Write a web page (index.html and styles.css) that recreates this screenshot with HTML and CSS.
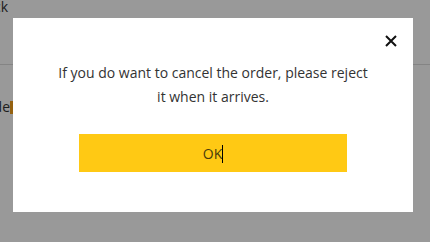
FILE: index.html
```html
<!DOCTYPE html>
<html lang="en">
<head>
  <meta charset="UTF-8">
  <meta name="viewport" content="width=device-width, initial-scale=1.0">
  <title>Cancel order</title>
  <link rel="stylesheet" href="styles.css">
</head>
<body>
  <div class="page">
    <header class="page-head">
      <div class="clip clip-head"><span>Back</span></div>
    </header>
    <div class="page-row">
      <div class="clip clip-row"><span>Code</span></div>
      <span class="row-mark"></span>
    </div>
  </div>

  <div class="overlay">
    <div class="modal">
      <button class="close-btn" aria-label="Close">
        <svg width="12" height="12" viewBox="0 0 12 12">
          <path d="M1 1 L11 11 M11 1 L1 11" stroke="#111" stroke-width="2" fill="none"/>
        </svg>
      </button>
      <p class="message">If you do want to cancel the order, please reject<br>it when it arrives.</p>
      <button class="ok-btn">OK<span class="caret"></span></button>
    </div>
  </div>
</body>
</html>
```

FILE: styles.css
```css
body {
  font-family: "Open Sans", Arial, sans-serif;
  background: #fff;
  color: #333;
  margin: 0;
  padding: 0;
  width: 430px;
  height: 242px;
  overflow: hidden;
}

.page-head {
  height: 64px;
  border-bottom: 1px solid #ddd;
  font-size: 14px;
  line-height: 14px;
}

.clip {
  display: flex;
  justify-content: flex-end;
  white-space: nowrap;
}

.clip-head {
  width: 8px;
  padding-top: 0;
}

.page-row {
  padding-top: 35px;
  font-size: 14px;
  line-height: 14px;
  display: flex;
  align-items: center;
}

.clip-row {
  width: 10px;
}

.row-mark {
  display: inline-block;
  width: 3px;
  height: 13px;
  background: #f7a21b;
}

.overlay {
  position: fixed;
  inset: 0;
  background: rgba(0, 0, 0, 0.4);
}

.modal {
  position: absolute;
  left: 13px;
  top: 18px;
  width: 400px;
  box-sizing: border-box;
  padding: 43px 66px 40px;
  background: #fff;
}

.close-btn {
  position: absolute;
  top: 17px;
  right: 16px;
  width: 12px;
  height: 12px;
  padding: 0;
  border: 0;
  background: none;
  display: block;
}

.close-btn svg {
  display: block;
}

.message {
  margin: 0 -40px;
  font-size: 14px;
  line-height: 24px;
  text-align: center;
  color: #333;
}

.ok-btn {
  display: block;
  width: 100%;
  height: 38px;
  margin-top: 25px;
  border: 0;
  background: #ffc914;
  font-family: "Open Sans", Arial, sans-serif;
  font-size: 14px;
  color: #4a3c0c;
  padding: 0;
}

.caret {
  display: inline-block;
  width: 1px;
  height: 18px;
  background: #000;
  vertical-align: -4px;
}
```
